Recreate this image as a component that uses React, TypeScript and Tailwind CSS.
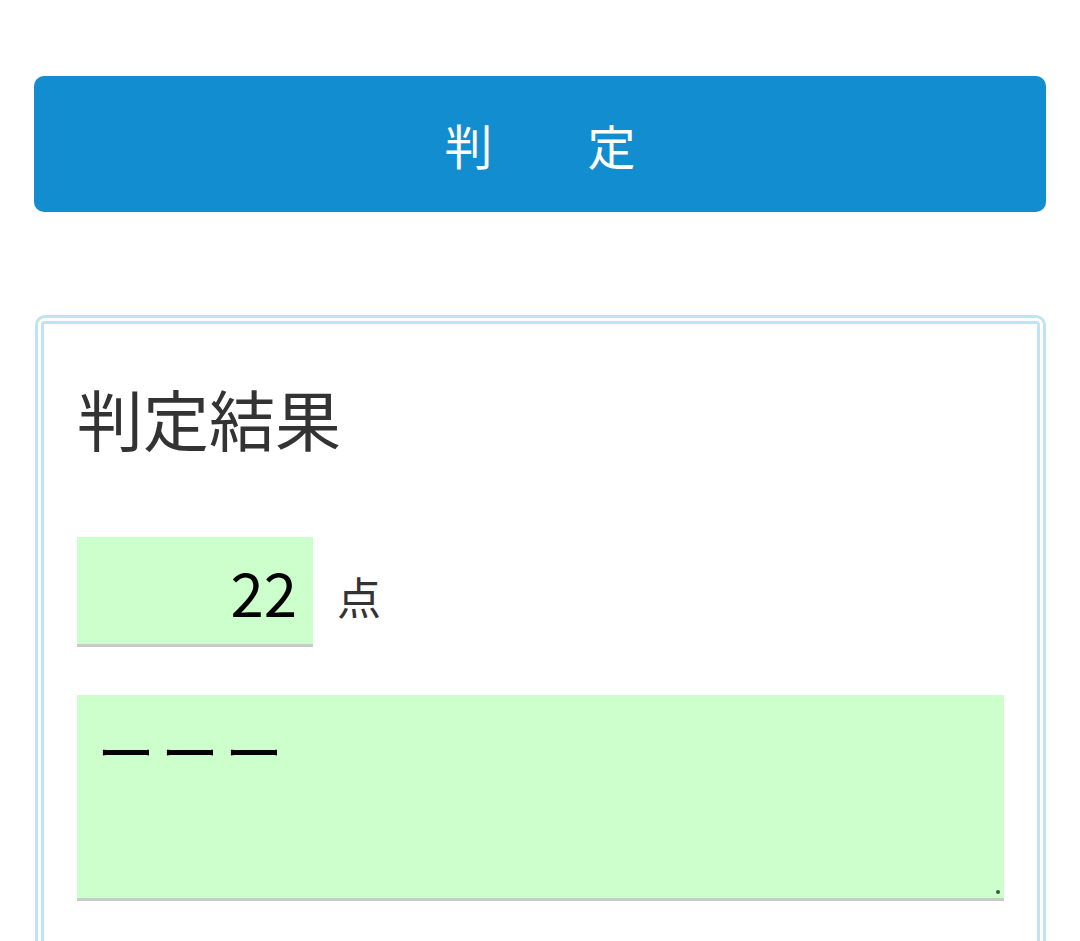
import React from 'react';

const font = { fontFamily: '"Noto Sans CJK JP", "Noto Sans", sans-serif' };

export default function App() {
  return (
    <div className="min-h-[941px] bg-white px-[34px] pt-[76px]" style={font}>
      <button className="flex h-[136px] w-full items-center justify-center gap-[95px] rounded-[10px] bg-[#128dcf] text-[48px] leading-none text-white">
        <span>判</span>
        <span>定</span>
      </button>

      <div className="ml-[1px] mt-[103px] rounded-[10px] border-[9px] border-double border-[#bfe3f0] pb-[60px] pl-[33px] pr-[33px] pt-[60px]">
        <h2 className="text-[66px] font-normal leading-none text-[#333]">判定結果</h2>

        <div className="mt-[87px] flex items-center">
          <div className="flex h-[110px] w-[236px] items-center justify-end border-b-[3px] border-[#c8cbc8] bg-[#ccffcc] pr-[16px] text-[60px] leading-none text-black">
            22
          </div>
          <span className="ml-[24px] mt-[8px] text-[44px] leading-none text-[#333]">点</span>
        </div>

        <div className="relative mt-[48px] h-[206px] w-full border-b-[3px] border-[#c8cbc8] bg-[#ccffcc] px-[20px] pt-[26px] text-[58px] leading-none tracking-[6px] text-black">
          ーーー
          <span className="absolute bottom-[4px] right-[4px] h-[4px] w-[4px] rounded-full bg-[#3b5a3b]" />
        </div>
      </div>
    </div>
  );
}
